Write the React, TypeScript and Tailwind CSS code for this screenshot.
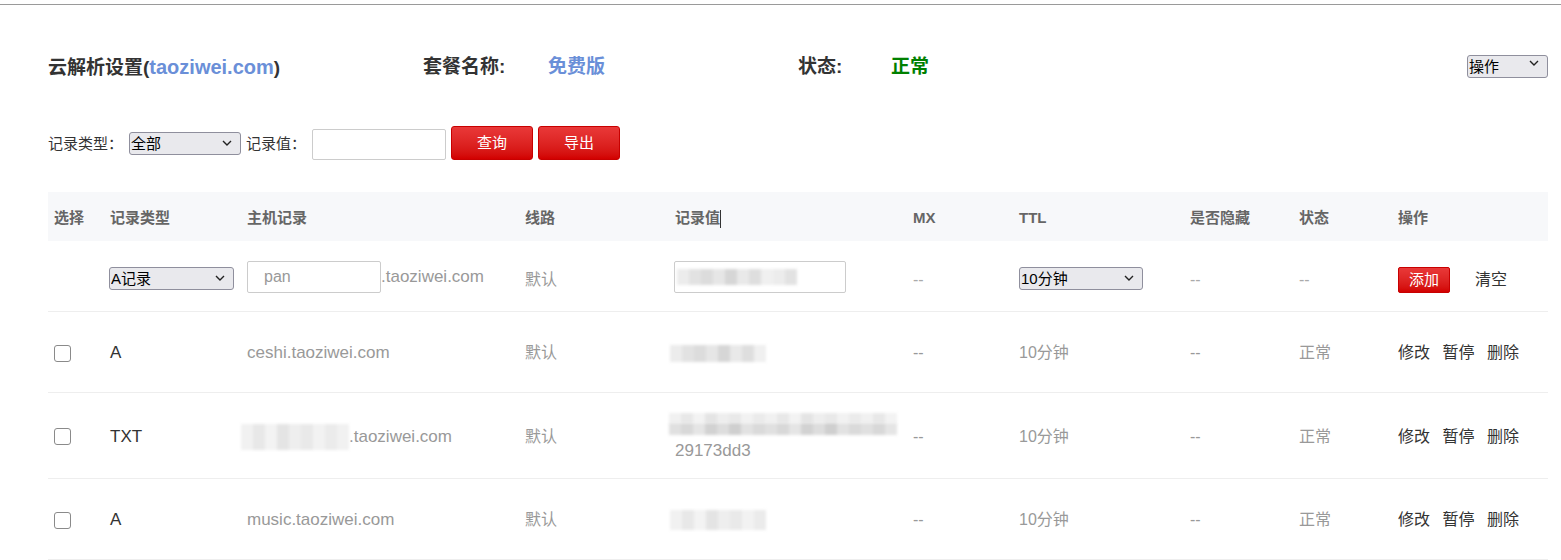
import React from "react";

const shades1 = ["bg-[#ececec]", "bg-[#e2e2e2]", "bg-[#dcdcdc]", "bg-[#e6e6e6]", "bg-[#d6d6d6]", "bg-[#e9e9e9]", "bg-[#dedede]", "bg-[#f0f0f0]"];
const shades2 = ["bg-[#f1f1f1]", "bg-[#e8e8e8]", "bg-[#f3f3f3]", "bg-[#e4e4e4]", "bg-[#eeeeee]", "bg-[#e9e9e9]", "bg-[#f2f2f2]", "bg-[#ebebeb]"];
const shades3 = ["bg-[#e0e0e0]", "bg-[#d8d8d8]", "bg-[#e5e5e5]", "bg-[#d2d2d2]", "bg-[#dddddd]", "bg-[#cfcfcf]", "bg-[#e2e2e2]", "bg-[#dadada]"];

const Blur = ({ count, shades, h }: { count: number; shades: string[]; h: string }) => (
  <div className={`flex blur-[1.5px] ${h}`}>
    {Array.from({ length: count }).map((_, i) => (
      <div key={i} className={`w-[12px] h-full ${shades[i % shades.length]}`} />
    ))}
  </div>
);

const Chevron = () => (
  <svg
    className="absolute right-[9px] top-1/2 -translate-y-1/2 pointer-events-none"
    width="10"
    height="6"
    viewBox="0 0 10 6"
    fill="none"
  >
    <path d="M1 1l4 4 4-4" stroke="#222" strokeWidth="1.4" />
  </svg>
);

const Select = ({ value, className }: { value: string; className: string }) => (
  <div className={`relative inline-block ${className}`}>
    <select
      defaultValue={value}
      className="appearance-none w-full h-full bg-[#e9e9ed] border border-[#8f8f9d] rounded-[3px] pl-[1px] text-[15px] text-black leading-none"
    >
      <option>{value}</option>
    </select>
    <Chevron />
  </div>
);

const Checkbox = () => (
  <input
    type="checkbox"
    className="appearance-none block w-[17px] h-[17px] border border-[#8a8a8a] rounded-[3px] bg-white"
  />
);

const Actions = () => (
  <div className="flex gap-[12.5px] text-[16px] text-[#333]">
    <a href="#">修改</a>
    <a href="#">暂停</a>
    <a href="#">删除</a>
  </div>
);

const App = () => {
  return (
    <div className="min-h-[560px] bg-white font-['Liberation_Sans','Noto_Sans_CJK_SC',sans-serif] text-[#333]">
      <div className="h-[4px]" />
      <div className="h-px bg-[#9a9a9a]" />
      <div className="pl-[48px] pr-[13px]">
        {/* header */}
        <div className="mt-[38px] h-[46px] flex items-center text-[19px] font-bold">
          <div className="w-[375px] text-[#333] pt-[2px]">
            云解析设置(<span className="text-[20px] text-[#6a8fd8]">taoziwei.com</span>)
          </div>
          <div className="w-[125px] pt-[2px]">套餐名称:</div>
          <div className="w-[250px] pt-[2px] text-[#6a8fd8]">免费版</div>
          <div className="w-[93px] pt-[2px]">状态:</div>
          <div className="pt-[2px] text-[#008000]">正常</div>
          <Select value="操作" className="ml-auto mb-[6px] w-[81px] h-[23px] font-normal" />
        </div>

        {/* filters */}
        <div className="mt-[37px] h-[34px] flex items-center text-[15px] text-[#333]">
          <span className="pt-[2px]">记录类型：</span>
          <Select value="全部" className="ml-[6px] w-[112px] h-[23px]" />
          <span className="ml-[5px] pt-[2px]">记录值：</span>
          <input className="ml-[6px] mt-[3px] w-[134px] h-[31px] border border-[#ccc] rounded-[2px] bg-white" />
          <button className="ml-[5px] w-[82px] h-[34px] rounded-[3px] border border-[#c80000] bg-gradient-to-b from-[#e93838] to-[#d20000] text-white text-[15px]">
            查询
          </button>
          <button className="ml-[5px] w-[82px] h-[34px] rounded-[3px] border border-[#c80000] bg-gradient-to-b from-[#e93838] to-[#d20000] text-white text-[15px]">
            导出
          </button>
        </div>

        {/* table */}
        <table className="mt-[32px] w-[1500px] table-fixed border-collapse text-left">
          <colgroup>
            <col className="w-[56px]" />
            <col className="w-[137px]" />
            <col className="w-[278px]" />
            <col className="w-[150px]" />
            <col className="w-[238px]" />
            <col className="w-[106px]" />
            <col className="w-[171px]" />
            <col className="w-[109px]" />
            <col className="w-[99px]" />
            <col className="w-[156px]" />
          </colgroup>
          <thead>
            <tr className="h-[49px] bg-[#f7f8fa] text-[15px] font-bold text-[#666] [&>th]:pt-[3px] [&>th]:pl-[6px] [&>th]:font-bold">
              <th>选择</th>
              <th>记录类型</th>
              <th>主机记录</th>
              <th>线路</th>
              <th>
                记录值<span className="inline-block w-px h-[18px] bg-[#333] align-middle" />
              </th>
              <th>MX</th>
              <th>TTL</th>
              <th>是否隐藏</th>
              <th>状态</th>
              <th>操作</th>
            </tr>
          </thead>
          <tbody className="text-[16px] text-[#999]">
            <tr className="h-[70px] border-b border-[#eee]">
              <td />
              <td className="pl-[5px] pt-[6px]">
                <Select value="A记录" className="w-[125px] h-[23px]" />
              </td>
              <td className="pl-[6px] pt-[2px]">
                <div className="flex items-center">
                  <input
                    placeholder="pan"
                    className="w-[134px] h-[32px] border border-[#ccc] rounded-[2px] bg-white pl-[16px] text-[16px] placeholder:text-[#999]"
                  />
                  <span className="text-[17px]">.taoziwei.com</span>
                </div>
              </td>
              <td className="pl-[6px] pt-[8px]">默认</td>
              <td className="pl-[5px] pt-[2px]">
                <div className="relative w-[172px] h-[32px] border border-[#ccc] rounded-[2px] bg-white flex items-center pl-[2px]">
                  <Blur count={10} shades={shades1} h="h-[16px]" />
                </div>
              </td>
              <td className="pl-[6px] pt-[8px] text-[#aaa]">--</td>
              <td className="pl-[6px] pt-[6px]">
                <Select value="10分钟" className="w-[124px] h-[23px]" />
              </td>
              <td className="pl-[6px] pt-[8px] text-[#aaa]">--</td>
              <td className="pl-[6px] pt-[8px] text-[#aaa]">--</td>
              <td className="pl-[6px] pt-[8px]">
                <div className="flex items-center">
                  <button className="w-[52px] h-[26px] rounded-[2px] border border-[#c80000] bg-gradient-to-b from-[#e93838] to-[#d20000] text-white text-[15px]">
                    添加
                  </button>
                  <span className="ml-[25px] text-[#333]">清空</span>
                </div>
              </td>
            </tr>

            <tr className="h-[81px] border-b border-[#eee] [&>td]:pt-[3px]">
              <td className="pl-[6px]"><Checkbox /></td>
              <td className="pl-[6px] text-[17px] text-[#333]">A</td>
              <td className="pl-[6px] text-[17px]">ceshi.taoziwei.com</td>
              <td className="pl-[6px]">默认</td>
              <td className="pl-[1px]">
                <Blur count={8} shades={shades1} h="h-[17px]" />
              </td>
              <td className="pl-[6px]">--</td>
              <td className="pl-[6px]">10分钟</td>
              <td className="pl-[6px]">--</td>
              <td className="pl-[6px]">正常</td>
              <td className="pl-[6px]"><Actions /></td>
            </tr>

            <tr className="h-[86px] border-b border-[#eee] [&>td]:pt-[3px]">
              <td className="pl-[6px]"><Checkbox /></td>
              <td className="pl-[6px] text-[17px] text-[#333]">TXT</td>
              <td className="pl-[0px]">
                <div className="flex items-center">
                  <Blur count={9} shades={shades2} h="h-[26px]" />
                  <span className="text-[17px]">.taoziwei.com</span>
                </div>
              </td>
              <td className="pl-[6px]">默认</td>
              <td className="pl-[0px]">
                <div className="flex flex-col">
                  <div className="flex flex-col">
                    <Blur count={19} shades={shades2} h="h-[10px]" />
                    <Blur count={19} shades={shades3} h="h-[12px]" />
                  </div>
                  <span className="pl-[6px] mt-[6px] leading-[20px] text-[17px]">29173dd3</span>
                </div>
              </td>
              <td className="pl-[6px]">--</td>
              <td className="pl-[6px]">10分钟</td>
              <td className="pl-[6px]">--</td>
              <td className="pl-[6px]">正常</td>
              <td className="pl-[6px]"><Actions /></td>
            </tr>

            <tr className="h-[81px] border-b border-[#eee] [&>td]:pt-[3px]">
              <td className="pl-[6px]"><Checkbox /></td>
              <td className="pl-[6px] text-[17px] text-[#333]">A</td>
              <td className="pl-[6px] text-[17px]">music.taoziwei.com</td>
              <td className="pl-[6px]">默认</td>
              <td className="pl-[1px]">
                <Blur count={8} shades={shades2} h="h-[20px]" />
              </td>
              <td className="pl-[6px]">--</td>
              <td className="pl-[6px]">10分钟</td>
              <td className="pl-[6px]">--</td>
              <td className="pl-[6px]">正常</td>
              <td className="pl-[6px]"><Actions /></td>
            </tr>
          </tbody>
        </table>
      </div>
    </div>
  );
};

export default App;
